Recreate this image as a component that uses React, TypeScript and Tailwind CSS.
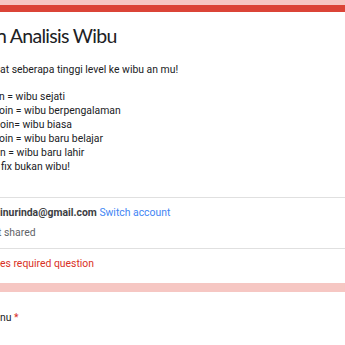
import React from "react";

export default function App() {
  const body = "font-['Roboto',_'Liberation_Sans',_sans-serif]";
  return (
    <div className={`w-[345px] h-[345px] overflow-hidden bg-[#f6c7c3] ${body}`}>
      <div className="mt-[5px] border-t-[7px] border-[#db4437] bg-white">
        <div className="pt-[9px] pl-0">
          <h1 className="font-['Lato',_'Noto_Sans',_sans-serif] text-[19.5px] tracking-[-0.7px] leading-[30px] text-[#202124] -ml-[4px] whitespace-nowrap">
            n Analisis Wibu
          </h1>
          <div className="mt-[12px] text-[10.4px] leading-[14px] text-[#202124] whitespace-nowrap">
            <div>at seberapa tinggi level ke wibu an mu!</div>
            <div className="h-[13px]" />
            <div className="-ml-[1px]">n = wibu sejati</div>
            <div className="-ml-[1px]">oin = wibu berpengalaman</div>
            <div>oin= wibu biasa</div>
            <div className="-ml-[1px]">oin = wibu baru belajar</div>
            <div>n = wibu baru lahir</div>
            <div className="ml-[1px]">fix bukan wibu!</div>
          </div>
        </div>
        <div className="mt-[23px] border-t border-[#e0e0e0]" />
        <div className="pt-[8px] text-[10.4px] leading-[14px] whitespace-nowrap">
          <div>
            <span className="font-bold text-[#3c4043]">inurinda@gmail.com</span>{" "}
            <span className="text-[#4285f4]">Switch account</span>
          </div>
          <div className="mt-[6px] -ml-[2px] text-[#5f6368]">t shared</div>
        </div>
        <div className="mt-[8px] border-t border-[#e0e0e0]" />
        <div className="pt-[8px] pb-[12px] text-[10.4px] leading-[14px] text-[#d93025] whitespace-nowrap">
          es required question
        </div>
      </div>
      <div className="mt-[9px] bg-white h-[60px] pt-[19px]">
        <div className="text-[10.4px] leading-[14px] text-[#202124] whitespace-nowrap">
          nu <span className="text-[#d93025]">*</span>
        </div>
      </div>
    </div>
  );
}
